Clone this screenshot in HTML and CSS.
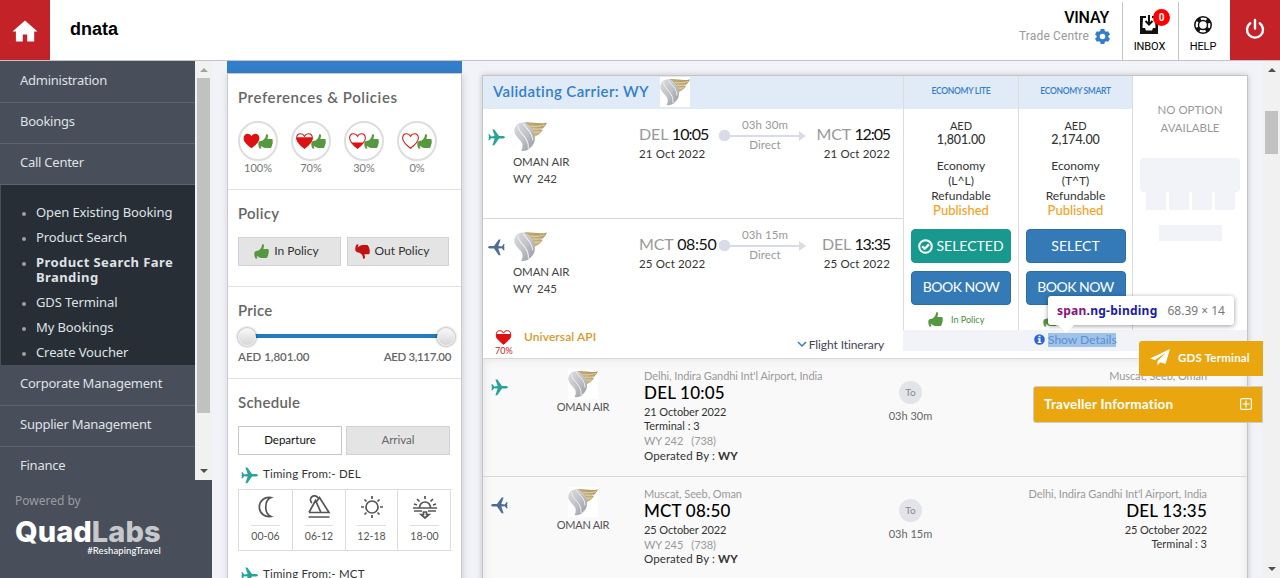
FILE: index.html
```html
<!DOCTYPE html>
<html lang="en">
<head>
<meta charset="utf-8">
<title>dnata</title>
<link rel="stylesheet" href="styles.css">
</head>
<body>
<svg class="defs" aria-hidden="true">
  <linearGradient id="silver" x1="0" y1="0" x2="1" y2="1"><stop offset="0" stop-color="#dcdddf"/><stop offset=".5" stop-color="#c0c2c7"/><stop offset="1" stop-color="#93969d"/></linearGradient>
  <linearGradient id="gold" x1="0" y1="1" x2="1" y2="0"><stop offset="0" stop-color="#d8c69a"/><stop offset="1" stop-color="#ab9157"/></linearGradient>
  <symbol id="plane" viewBox="0 0 17 17"><path d="M17 8.300c0 .9-1.600 1.300-3 1.300h-3L6.300 16.200H4.400L6.700 9.600 3.200 9.200 1.600 11.300H.4L1 8.700 0 8.300 1 7.900.4 5.300h1.200L3.200 7.400 6.700 7 4.400.5h1.900L11 7h3c1.400 0 3 .4 3 1.300z"/></symbol>
  <symbol id="thumb" viewBox="0 0 16 16"><path d="M8.600.6C9.900-.2 11 .8 10.600 2.600L10 5.200h4.200c1.500 0 2 1.300 1.200 2.200.6.600.6 1.500 0 2.100.4.700.2 1.500-.4 1.900.2.800 0 1.500-.6 1.800 0 1.100-.7 1.700-1.800 1.700H8.200c-1.200 0-2.200-.4-3.300-1L2.900 12.400c.1 1.200.5 2.100 1 2.900l-2 .4C.7 14.300-.2 10.800.6 8.900c.7-1.500 2.300-1.900 4.300-2.100C7.200 5.600 8.300 3.800 8.600.6z"/></symbol>
  <symbol id="heart" viewBox="0 0 16 15"><path d="M8 14.300C2.500 10 .6 7.800.6 4.800.6 2.300 2.200.7 4.300.7c1.700 0 3 .9 3.700 2.400C8.700 1.600 10 .7 11.700.7c2.100 0 3.700 1.600 3.700 4.100 0 3-1.900 5.200-7.400 9.500z"/></symbol>
  <symbol id="wing" viewBox="0 0 30 30"><path fill="url(#gold)" d="M9 2.500C15 1 23 4.500 30 2.200 28.500 5.500 27 7.500 24 8.700 25 9 25.500 9 26.500 8.600 24 12.500 21 14.500 18 15.500 18.500 10 15 5 9 2.500z"/><path fill="url(#silver)" d="M8.500 2.200C3 2.500 0 6 .3 10.500 .7 15 6 17.500 7.500 21.500c.5 2.500.2 4.500-1 6.600 3 .6 6-.3 8-2.600 2.500-2 4.500-5 4.500-8.500C19 10 14.500 4.500 8.500 2.200z"/><path d="M3.500 5C4 13 14 15 13 26M8.500 3.500c3 5 8.500 7.500 8.500 15" fill="none" stroke="#f1f1f3" stroke-width="1"/><path d="M15 5.500c5 .8 9 0 13-1M17 8c4 .7 6 .2 8-.3M18.500 11c2 .3 4 0 5-.4" fill="none" stroke="#efe6cd" stroke-width=".7"/></symbol>
</svg>

<header class="topbar">
  <a class="home"><svg width="26" height="22" viewBox="0 0 26 22"><path fill="#fff" d="M13 .5 25.500 11.500H22.200V21.500H15.200V14.500H10.800V21.500H3.900V11.500H.5z"/></svg></a>
  <div class="brand">dnata</div>
  <div class="user"><div class="user-name">VINAY</div><div class="user-branch">Trade Centre
    <svg width="15" height="15" viewBox="0 0 24 24"><path fill="#337ecb" fill-rule="evenodd" d="M9 0h6l.6 3.200 2.200 1.300L21 3.500l3 5.100-2.600 2.100v2.600l2.600 2.100-3 5.100-3.200-1.100-2.200 1.300L15 24H9l-.6-3.300-2.200-1.300L3 20.500 0 15.400l2.600-2.100v-2.600L0 8.600l3-5.100 3.200 1 2.200-1.300zM12 7.600a4.400 4.400 0 1 0 0 8.800 4.400 4.400 0 0 0 0-8.800z"/></svg></div></div>
  <div class="tool inbox"><svg width="20" height="20" viewBox="0 0 20 20"><path fill="#111" fill-rule="evenodd" d="M1 1h6v2H4L3.500 13H6l1 2.500h6L14 13h2.500L16 3h-3V1h5l1 10v8H1z"/><path d="M10 0v9M6.500 6 10 9.500 13.500 6" fill="none" stroke="#111" stroke-width="2"/></svg><span>INBOX</span><b class="badge">0</b></div>
  <div class="tool help"><svg width="20" height="20" viewBox="0 0 20 20" fill="none" stroke="#111"><circle cx="10" cy="10" r="8.200" stroke-width="1.500"/><circle cx="10" cy="10" r="4.500" stroke-width="1.500"/><circle cx="10" cy="10" r="6.500" stroke-width="3.600" stroke-dasharray="4.200 6.010" stroke-dashoffset="-3"/></svg><span>HELP</span></div>
  <a class="power"><svg width="20" height="22" viewBox="0 0 20 22" fill="none" stroke="#fff" stroke-width="2.400" stroke-linecap="round"><path d="M5.200 5.200a8 8 0 1 0 9.600 0M10 2v8.500"/></svg></a>
</header>

<div class="workspace">
  <aside class="sidebar">
    <div class="nav-scroll">
      <nav class="nav">
        <a class="nav-item first">Administration</a>
        <a class="nav-item">Bookings</a>
        <a class="nav-item">Call Center</a>
        <ul class="subnav">
          <li>Open Existing Booking</li><li>Product Search</li><li class="active">Product Search Fare Branding</li><li>GDS Terminal</li><li>My Bookings</li><li>Create Voucher</li>
        </ul>
        <a class="nav-item">Corporate Management</a>
        <a class="nav-item">Supplier Management</a>
        <a class="nav-item">Finance</a>
      </nav>
      <div class="scrollbar nav-bar"><i class="up dim"></i><i class="thumb"></i><i class="down"></i></div>
    </div>
    <footer class="powered"><div class="powered-by">Powered by</div><div class="quad">Quad<span>Labs</span></div><div class="tagline">#ReshapingTravel</div></footer>
  </aside>

  <section class="filters">
    <div class="filters-bar"></div>
    <div class="filters-body">
      <div class="block prefs">
        <h3 class="wide">Preferences &amp; Policies</h3>
        <div class="hearts">
          <div class="pref"><span><svg class="hrt"><use href="#heart" fill="#d11"/></svg><svg class="th"><use href="#thumb"/></svg></span>100%</div>
          <div class="pref"><span><svg class="hrt" viewBox="0 0 16 15"><clipPath id="c70"><path d="M0 4h16v11H0z"/></clipPath><use href="#heart" fill="#fff" stroke="#d11"/><use href="#heart" fill="#d11" clip-path="url(#c70)"/></svg><svg class="th"><use href="#thumb"/></svg></span>70%</div>
          <div class="pref"><span><svg class="hrt" viewBox="0 0 16 15"><clipPath id="c30"><path d="M0 9h16v6H0z"/></clipPath><use href="#heart" fill="#fff" stroke="#d11"/><use href="#heart" fill="#d11" clip-path="url(#c30)"/></svg><svg class="th"><use href="#thumb"/></svg></span>30%</div>
          <div class="pref"><span><svg class="hrt"><use href="#heart" fill="#fff" stroke="#d11"/></svg><svg class="th"><use href="#thumb"/></svg></span>0%</div>
        </div>
      </div>
      <div class="block policy">
        <h3>Policy</h3>
        <div class="pair"><button class="pbtn"><svg class="th"><use href="#thumb"/></svg>In Policy</button><button class="pbtn out"><svg class="th"><use href="#thumb"/></svg>Out Policy</button></div>
      </div>
      <div class="block price">
        <h3>Price</h3>
        <div class="slider"><i></i><b></b><i></i></div>
        <div class="range"><span>AED 1,801.00</span><span class="max">AED 3,117.00</span></div>
      </div>
      <div class="block schedule">
        <h3>Schedule</h3>
        <div class="tabs"><div class="tab on">Departure</div><div class="tab">Arrival</div></div>
        <div class="timing"><svg class="plane"><use href="#plane"/></svg><span>Timing From:- DEL</span></div>
        <div class="slots">
          <div><svg viewBox="0 0 24 24"><path d="M17 2.500A9.700 9.700 0 1 0 17 21.500C10 18.500 10 5.500 17 2.500z"/></svg><span>00-06</span></div>
          <div><svg viewBox="0 0 24 24"><path d="M2 17.500 8.500 5.500 14 17.500M8.500 8 12.500 2.500 22 17.500H2M1.500 22h21M5 8a4 4 0 1 1 6-5"/></svg><span>06-12</span></div>
          <div><svg viewBox="0 0 24 24"><circle cx="12" cy="12" r="6"/><path d="M12 1v3M12 20v3M1 12h3M20 12h3M4.500 4.500l2 2M17.500 17.500l2 2M4.500 19.500l2-2M17.500 6.500l2-2"/></svg><span>12-18</span></div>
          <div><svg viewBox="0 0 24 24"><path d="M6.500 12.500a5.500 5.500 0 0 1 11 0M0 13h24M1 16h8M15 16h8M12 1v3M4 4l2.500 2.500M20 4l-2.500 2.500M1 9l3 1M23 9l-3 1M10.500 17h3v2.500H16L12 23l-4-3.500h2.500z"/></svg><span>18-00</span></div>
        </div>
        <div class="timing second"><svg class="plane"><use href="#plane"/></svg><span>Timing From:- MCT</span></div>
      </div>
    </div>
  </section>

  <main class="results">
    <div class="offer">
      <div class="journey">
        <div class="offer-head"><span>Validating Carrier: WY</span><svg class="logo boxed"><use href="#wing"/></svg></div>
        <div class="leg">
          <svg class="plane"><use href="#plane"/></svg>
          <div class="airline"><svg class="wing"><use href="#wing"/></svg><div>OMAN AIR</div><div>WY&nbsp; 242</div></div>
          <div class="stop"><p><em>DEL</em> <b>10:05</b></p><small>21 Oct 2022</small></div>
          <div class="route"><span>03h 30m</span><div class="arrow"></div><span>Direct</span></div>
          <div class="stop end"><p><em>MCT</em> <b>12:05</b></p><small>21 Oct 2022</small></div>
        </div>
        <div class="leg back">
          <svg class="plane return"><use href="#plane"/></svg>
          <div class="airline"><svg class="wing"><use href="#wing"/></svg><div>OMAN AIR</div><div>WY&nbsp; 245</div></div>
          <div class="stop wide"><p><em>MCT</em> <b>08:50</b></p><small>25 Oct 2022</small></div>
          <div class="route"><span>03h 15m</span><div class="arrow"></div><span>Direct</span></div>
          <div class="stop end"><p><em>DEL</em> <b>13:35</b></p><small>25 Oct 2022</small></div>
        </div>
        <div class="offer-foot">
          <div class="score"><svg viewBox="0 0 16 15"><use href="#heart" fill="#fff" stroke="#d11"/><use href="#heart" fill="#d11" clip-path="url(#c70)"/></svg>70%</div>
          <div class="api">Universal API</div>
          <div class="itin"><svg width="10" height="7" viewBox="0 0 10 7"><path d="M1 1l4 4 4-4" fill="none" stroke="#337ecb" stroke-width="1.500"/></svg>Flight Itinerary</div>
        </div>
      </div>
      <div class="fares">
        <div class="fare-cols">
          <div class="fare"><div class="fare-head">ECONOMY LITE</div>
            <div class="amount">AED<b>1,801.00</b></div><div class="cabin">Economy<br>(L^L)<br>Refundable</div><div class="pub">Published</div>
            <button class="btn green"><svg width="15" height="15" viewBox="0 0 15 15" fill="none" stroke="#fff" stroke-width="2"><circle cx="7.500" cy="7.500" r="6.300"/><path d="M4.200 7.200l2.500 2.500 4.300-4.300" stroke-width="2.300"/></svg>SELECTED</button><button class="btn book">BOOK NOW</button>
            <div class="inpol"><svg class="th"><use href="#thumb"/></svg>In Policy</div></div>
          <div class="fare smart"><div class="fare-head">ECONOMY SMART</div>
            <div class="amount">AED<b>2,174.00</b></div><div class="cabin">Economy<br>(T^T)<br>Refundable</div><div class="pub">Published</div>
            <button class="btn">SELECT</button><button class="btn book">BOOK NOW</button>
            <div class="inpol"><svg class="th"><use href="#thumb"/></svg></div></div>
          <div class="nofare">NO OPTION<br>AVAILABLE<div class="ph-top"></div><div class="ph-row"><i></i><i></i><i></i><i></i></div><div class="ph-low"></div></div>
        </div>
        <div class="details-strip"><svg width="11" height="11" viewBox="0 0 11 11"><circle cx="5.500" cy="5.500" r="5.300" fill="#2a67d3"/><path fill="#fff" d="M4.500 1.700h2v1.600h-2zM3.800 4.300h2.700v3.600h.9V9H3.700V7.900h.9V5.300h-.8z"/></svg><span>Show Details</span>
          <div class="tip"><b>span</b><strong>.ng-binding</strong><span>68.39 × 14</span></div></div>
      </div>
    </div>

    <div class="details">
      <div class="seg">
        <svg class="plane"><use href="#plane"/></svg>
        <div class="seg-air"><svg class="logo boxed"><use href="#wing"/></svg>OMAN AIR</div>
        <div class="seg-from"><div class="city">Delhi, Indira Gandhi Int'l Airport, India</div><div class="when">DEL 10:05</div><div class="dt">21 October 2022</div><div class="term">Terminal : 3</div><div class="flt">WY 242 &nbsp; (738)</div><div class="op">Operated By : <b>WY</b></div></div>
        <div class="seg-mid"><i>To</i>03h 30m</div>
        <div class="seg-to"><div class="city">Muscat, Seeb, Oman</div></div>
      </div>
      <div class="seg last">
        <svg class="plane return"><use href="#plane"/></svg>
        <div class="seg-air"><svg class="logo boxed"><use href="#wing"/></svg>OMAN AIR</div>
        <div class="seg-from"><div class="city">Muscat, Seeb, Oman</div><div class="when">MCT 08:50</div><div class="dt">25 October 2022</div><div class="flt">WY 245 &nbsp; (738)</div><div class="op">Operated By : <b>WY</b></div></div>
        <div class="seg-mid"><i>To</i>03h 15m</div>
        <div class="seg-to"><div class="city">Delhi, Indira Gandhi Int'l Airport, India</div><div class="when">DEL 13:35</div><div class="dt">25 October 2022</div><div class="term">Terminal : 3</div></div>
      </div>
    </div>
  </main>
  <div class="scrollbar page-bar"><i class="up"></i><i class="thumb"></i><i class="down"></i></div>
</div>

<div class="gds"><svg width="20" height="17" viewBox="0 0 20 17"><path fill="#fff" d="M20 0 0 9.500l5 1.500L16 3.500 7.500 12v4.500l2.700-3.300L15.500 15z"/></svg>GDS Terminal</div>
<div class="traveller">Traveller Information<svg width="12" height="12" viewBox="0 0 12 12" fill="none" stroke="#fff" stroke-width="1.200"><rect x=".6" y=".6" width="10.800" height="10.800" rx="1.500"/><path d="M6 2.500v7M2.500 6h7"/></svg></div>
</body>
</html>
```
FILE: styles.css
```css
* { box-sizing: border-box; }
body { margin: 0; width: 1280px; height: 578px; overflow: hidden; position: relative; background: #f2f3f8; font-family: Lato, "Open Sans", sans-serif; font-size: 12px; color: #333; }
h3, p, ul { margin: 0; padding: 0; }
svg { display: block; flex: none; }
.defs { position: absolute; width: 0; height: 0; }
button { font-family: inherit; padding: 0; margin: 0; }

/* top bar */
.topbar { display: flex; height: 61px; background: #fff; border-bottom: 1px solid #c4c4c4; font-family: Roboto, sans-serif; color: #000; }
.home { width: 50px; height: 60px; background: #c22228; display: flex; align-items: center; justify-content: center; padding-top: 2px; }
.brand { margin-left: 20px; font: bold 18px/59px "Liberation Sans", sans-serif; }
.user { margin-left: auto; width: 200px; padding: 8px 13px 0 0; text-align: right; }
.user-name { font-size: 16px; line-height: 20px; font-weight: 500; letter-spacing: -.2px; }
.user-branch { display: flex; justify-content: flex-end; align-items: center; gap: 6px; color: #999; font-size: 12px; line-height: 17px; letter-spacing: .15px; margin-right: -1px; }
.tool { position: relative; width: 56px; margin-top: 2px; height: 58px; border-left: 1px solid #c4c4c4; display: flex; flex-direction: column; align-items: center; padding: 13px 2px 0 0; font-size: 11px; line-height: 12px; }
.tool span { margin-top: 6px; letter-spacing: -.1px; }
.inbox svg { margin-right: 1px; }
.help { width: 52px; padding-right: 3px; }
.badge { position: absolute; left: 30px; top: 7px; width: 17px; height: 17px; border-radius: 50%; background: #f00; color: #fff; font-size: 10px; line-height: 17px; text-align: center; }
.power { width: 50px; height: 60px; background: #c22228; display: flex; align-items: center; justify-content: center; padding-bottom: 2px; }

.workspace { display: flex; height: 517px; overflow: hidden; }

/* scrollbars */
.scrollbar { width: 17px; background: #f1f1f1; display: flex; flex-direction: column; align-items: center; flex: none; }
.scrollbar i { display: block; }
.up, .down { border: 4px solid transparent; width: 0; height: 0; }
.up { border-top: 0; border-bottom-color: #505050; margin-top: 7px; }
.up.dim { border-bottom-color: #a3a3a3; }
.down { border-bottom: 0; border-top-color: #505050; margin: auto 0 7px; }
.thumb { width: 13px; background: #c1c1c1; }
.nav-bar .thumb { height: 335px; margin-top: 6px; }
.page-bar .thumb { height: 43px; margin-top: 39px; }

/* sidebar */
.sidebar { width: 212px; flex: none; background: #484e5a; font-family: "Noto Sans", sans-serif; }
.nav-scroll { display: flex; height: 419px; overflow: hidden; }
.nav { width: 195px; color: #dfe2e5; font-size: 13px; letter-spacing: -.1px; }
.nav-item { display: block; height: 41px; line-height: 37px; padding-left: 20px; border-bottom: 1px solid #5e656f; letter-spacing: -.25px; }
.nav-item.first { height: 42px; line-height: 38px; }
.subnav { list-style: none; margin-left: 1px; height: 180px; padding: 15px 0 0 35px; background: #272e36; }
.subnav li { line-height: 15px; margin: 5px 0 10px; width: 145px; position: relative; }
.subnav li::before { content: ""; position: absolute; left: -14px; top: 7px; width: 4px; height: 4px; border-radius: 50%; background: #9da1a7; }
.subnav .active { font-weight: bold; letter-spacing: .42px; }
.powered { padding: 12px 0 0 15px; height: 98px; color: #999da2; font-size: 12px; }
.powered-by { line-height: 17px; }
.quad { font: 800 29px/26px Inter, sans-serif; letter-spacing: .05px; color: #fff; margin-top: 10px; height: 26px; }
.quad span { color: #c6c8cb; }
.tagline { font: 500 9.500px/11px Lato, sans-serif; color: #fff; width: 146px; text-align: right; letter-spacing: .1px; }

/* filters */
.filters { width: 235px; margin-left: 15px; flex: none; }
.filters-bar { height: 12px; background: #337ecb; }
.filters-body { height: 520px; background: #fff; border: 1px solid #c9c9c9; box-shadow: 1px 2px 8px rgba(0,0,0,.15); }
.block { padding: 0 11px 0 10px; border-bottom: 1px solid #e0e0e0; }
.block h3 { font-size: 15px; line-height: 20px; font-weight: 600; color: #666; letter-spacing: .25px; padding-bottom: 1px; }
.block h3.wide { letter-spacing: .58px; }
.prefs { height: 116px; padding-top: 13px; }
.hearts { display: flex; gap: 13px; margin-top: 13px; }
.pref { width: 40px; text-align: center; font-size: 11px; line-height: 14px; color: #777; }
.pref span { display: flex; align-items: center; justify-content: center; width: 40px; height: 40px; border: 2px solid #ddd; border-radius: 50%; }
.hrt { width: 17px; height: 16px; }
.th { width: 15px; height: 15px; fill: #56983f; }
.pref .th { margin-left: -2px; }
.policy { height: 97px; padding-top: 13px; }
.pair { display: flex; gap: 6px; margin-top: 13px; }
.pbtn { width: 103px; height: 29px; background: #e4e4e4; border: 1px solid #d2d2d2; display: flex; align-items: center; justify-content: center; gap: 5px; padding: 0 6px 3px 0; font-size: 12px; color: #333; }
.pbtn .th { margin-top: 2px; }
.pbtn.out { width: 102px; padding-right: 12px; }
.out .th { fill: #c11111; transform: scaleY(-1); }
.price { height: 92px; padding-top: 13px; }
.slider { display: flex; align-items: center; height: 18px; margin: 7px -5px 0 0; }
.slider b { flex: 1; height: 4px; background: #207bc1; margin: 0 -2px 2px; }
.slider i { width: 18px; height: 18px; border-radius: 50%; background: linear-gradient(#f8f8f8, #d6d6d6); border: 1px solid #eee; box-shadow: 0 0 3px rgba(0,0,0,.6); z-index: 1; }
.range { display: flex; justify-content: space-between; font-size: 11.500px; line-height: 16px; color: #666; font-weight: 600; margin-top: 3px; margin-right: -1px; }
.range .max { letter-spacing: -.35px; }
.schedule { padding-top: 13px; border: 0; }
.tabs { display: flex; gap: 4px; margin-top: 13px; }
.tab { width: 104px; height: 29px; line-height: 26px; text-align: center; background: #e4e4e4; border: 1px solid #d2d2d2; font-size: 11.500px; color: #666; }
.tab.on { background: #fff; color: #111; border-color: #c8c8c8; }
.timing { display: flex; align-items: center; gap: 5px; margin-top: 10px; padding-left: 3px; height: 20px; font-size: 11.500px; letter-spacing: .2px; color: #333; }
.timing span { line-height: 14px; margin-bottom: 3px; }
.plane { width: 17px; height: 17px; fill: #27a496; }
.plane.return { fill: #4f6c98; transform: scaleX(-1); }
.slots { display: grid; grid-template-columns: 54px 53px 52px 53px; width: 213px; height: 62px; margin-top: 4px; border: 1px solid #dcdcdc; }
.slots div { display: flex; flex-direction: column; align-items: center; padding-top: 5px; border-right: 1px solid #dcdcdc; }
.slots div:last-child { border: 0; }
.slots svg { width: 24px; height: 24px; fill: none; stroke: #555; stroke-width: 1.700; }
.slots span { border-top: 1px solid #ddd; margin-top: 6px; padding: 3px 0; font-size: 10.500px; line-height: 14px; color: #555; }
.timing.second { margin-top: 14px; }

/* results */
.results { width: 766px; margin: 14px 0 0 20px; height: 530px; flex: none; background: #fff; border: 1px solid #c4c4c4; box-shadow: 0 0 6px rgba(0,0,0,.2); }
.page-bar { margin-left: auto; }
.offer { display: flex; height: 283px; border-bottom: 1px solid #d8d8d8; }
.journey { width: 420px; }
.offer-head { display: flex; align-items: center; height: 33px; padding: 0 0 3px 10px; background: #e0ebf7; color: #337ecb; font-size: 15px; font-weight: 600; letter-spacing: .38px; }
.logo { width: 30px; height: 30px; background: #fff; }
.offer-head .logo { margin: 2px 0 0 11px; }
.leg { display: flex; height: 110px; border-bottom: 1px solid #d8d8d8; padding: 11px 13px 0 5px; }
.leg.back { border: 0; }
.leg .plane { margin-top: 9px; }
.airline { margin-left: 8px; width: 126px; font-size: 11.500px; line-height: 17px; color: #444; letter-spacing: -.1px; }
.wing { width: 35px; height: 33px; margin: 0; }
.stop { width: 80px; white-space: nowrap; }
.stop p { font-size: 16px; line-height: 20px; color: #111; margin-top: 4px; letter-spacing: -.1px; }
.stop p b { font-weight: 400; letter-spacing: -.9px; }
.stop.wide p b { letter-spacing: -.4px; }
.stop.end p { letter-spacing: -.2px; }
.stop.end p b { letter-spacing: -1.100px; }
.stop em { font-style: normal; color: #999; }
.stop small { display: block; font-size: 11.500px; line-height: 19px; letter-spacing: .15px; }
.stop.end { margin-left: auto; text-align: right; }
.route { width: 87px; margin-left: 0; text-align: center; color: #999; font-size: 11.500px; letter-spacing: .1px; }
.route span { display: block; line-height: 10px; padding-left: 5px; }
.arrow { position: relative; height: 11px; margin: 0 0 -1px; display: flex; align-items: center; }
.arrow::before { content: ""; width: 80px; height: 11px; background: radial-gradient(circle at 5.500px 5.500px, #d9dce6 5.500px, transparent 6px), linear-gradient(#d9dce6, #d9dce6) 0 5px / 100% 2px no-repeat; }
.arrow::after { content: ""; border: 5.500px solid transparent; border-left: 7px solid #d9dce6; border-right: 0; }
.offer-foot { display: flex; height: 30px; padding-left: 12px; }
.score { width: 17px; font-size: 9px; line-height: 12px; color: #c22; text-align: center; margin-top: 1px; white-space: nowrap; }
.score svg { width: 17px; height: 15px; }
.api { margin-left: 12px; color: #da9a1e; font-weight: 600; line-height: 16px; letter-spacing: .1px; }
.itin { display: flex; align-items: center; gap: 2px; margin: 5px 0 0 auto; padding-right: 19px; height: 20px; color: #445; letter-spacing: -.1px; }
.fares { width: 344px; }
.fare-cols { display: flex; height: 254px; }
.fare { width: 115px; border-left: 1px solid #dcdcdc; display: flex; flex-direction: column; align-items: center; text-align: center; }
.fare.smart { width: 114px; }
.fare-head { align-self: stretch; height: 33px; line-height: 31px; background: #e0ebf7; color: #337ecb; font-size: 8.500px; font-weight: 600; letter-spacing: -.3px; }
.amount { font-size: 11px; line-height: 15px; margin-top: 9px; }
.amount b { display: block; font-size: 12.500px; line-height: 14px; font-weight: 500; letter-spacing: -.1px; }
.cabin { font-size: 12px; line-height: 15px; margin-top: 11px; }
.pub { font-size: 13px; line-height: 14px; color: #f9a11b; font-weight: 500; }
.btn { width: 100px; height: 34px; margin-top: 8px; padding-bottom: 2px; border: 1px solid #2e6da4; border-radius: 4px; background: #337ab7; color: #fff; font-size: 14px; display: flex; align-items: center; justify-content: center; gap: 3px; }
.btn.book { letter-spacing: -.5px; padding-bottom: 3px; }
.btn svg { margin-top: 2px; }
.pub + .btn { margin-top: 12px; }
.btn.green { background: #17998d; border-color: #17998d; }
.inpol { display: flex; align-items: center; gap: 8px; height: 16px; margin: 6px 0 0 5px; align-self: stretch; padding-left: 19px; font-size: 9px; color: #4b8a3b; }
.nofare { width: 115px; border-left: 1px solid #dcdcdc; text-align: center; font-size: 11.500px; line-height: 18px; color: #999; padding: 25px 7px 0; }
.ph-top { height: 34px; margin-top: 21px; background: #f2f3f8; border-radius: 3px; }
.ph-row { display: flex; gap: 3px; padding: 0 5px 0 6px; }
.ph-row i { flex: 1; height: 18px; background: #f2f3f8; }
.ph-low { width: 63px; height: 16px; margin: 15px auto 0; background: #f2f3f8; }
.details-strip { position: relative; display: flex; align-items: center; height: 21px; background: #f2f3f8; padding: 0 0 2px 131px; gap: 3px; }
.details-strip > span { width: 68px; height: 14px; line-height: 14px; font-size: 12px; background: #9fc3e8; color: #5a8fd4; white-space: nowrap; }
.tip { position: absolute; left: 145px; top: -34px; width: 186px; height: 29px; padding: 0 9px; border-radius: 3px; background: #fff; box-shadow: 0 1px 5px rgba(0,0,0,.4); display: flex; align-items: center; font: 12px "Noto Sans", sans-serif; z-index: 2; }
.tip::after { content: ""; position: absolute; left: 10px; top: 29px; border: 8px solid transparent; border-top-color: #fff; border-bottom: 0; }
.tip b { color: #881280; letter-spacing: .25px; }
.tip strong { color: #1a1aa6; letter-spacing: .25px; }
.tip span { margin-left: auto; color: #777; }

/* itinerary */
.details { height: 240px; background: #f9f9f9; box-shadow: inset 0 0 10px rgba(0,0,0,.1); }
.seg { display: flex; height: 118px; border-bottom: 1px solid #d8d8d8; padding: 10px 40px 0 8px; }
.seg .plane { margin-top: 10px; }
.seg-air { width: 60px; margin-left: 45px; display: flex; flex-direction: column; align-items: center; font-size: 11px; line-height: 16px; letter-spacing: -.3px; color: #555; white-space: nowrap; }
.seg-from { margin-left: 31px; width: 230px; }
.city { font-size: 11px; line-height: 14px; color: #999; letter-spacing: -.08px; }
.when { font-size: 17px; line-height: 19px; color: #000; font-weight: 500; letter-spacing: .2px; }
.dt { font-size: 11px; line-height: 15px; margin-top: 2px; letter-spacing: -.1px; }
.term { font-size: 11px; line-height: 14px; }
.flt { font-size: 11px; line-height: 15px; color: #999; letter-spacing: -.1px; }
.op { font-size: 11.500px; line-height: 15px; letter-spacing: .1px; }
.last .op { line-height: 14px; }
.seg-mid { width: 73px; display: flex; flex-direction: column; align-items: center; font-size: 11px; line-height: 15px; color: #666; padding-top: 12px; }
.seg-mid i { width: 23px; height: 23px; border-radius: 50%; background: #e2e4e9; font-style: normal; text-align: center; line-height: 23px; font-size: 10px; color: #888; margin-bottom: 4px; }
.seg-to { margin-left: auto; text-align: right; white-space: nowrap; }

/* floating panels */
.gds { position: absolute; left: 1139px; top: 341px; width: 124px; height: 35px; background: #e9a60e; border-radius: 3px 0 0 3px; color: #fff; font-weight: bold; display: flex; align-items: center; gap: 8px; padding: 0 0 2px 11px; font-size: 11.500px; letter-spacing: .2px; z-index: 3; }
.traveller { position: absolute; left: 1033px; top: 386px; width: 230px; height: 37px; background: #e9a60e; border: 1px solid #ccc; border-radius: 3px 0 0 3px; color: #fff; font-weight: bold; font-size: 13.500px; letter-spacing: .2px; display: flex; align-items: center; justify-content: space-between; padding: 0 10px 2px; z-index: 3; }
```
